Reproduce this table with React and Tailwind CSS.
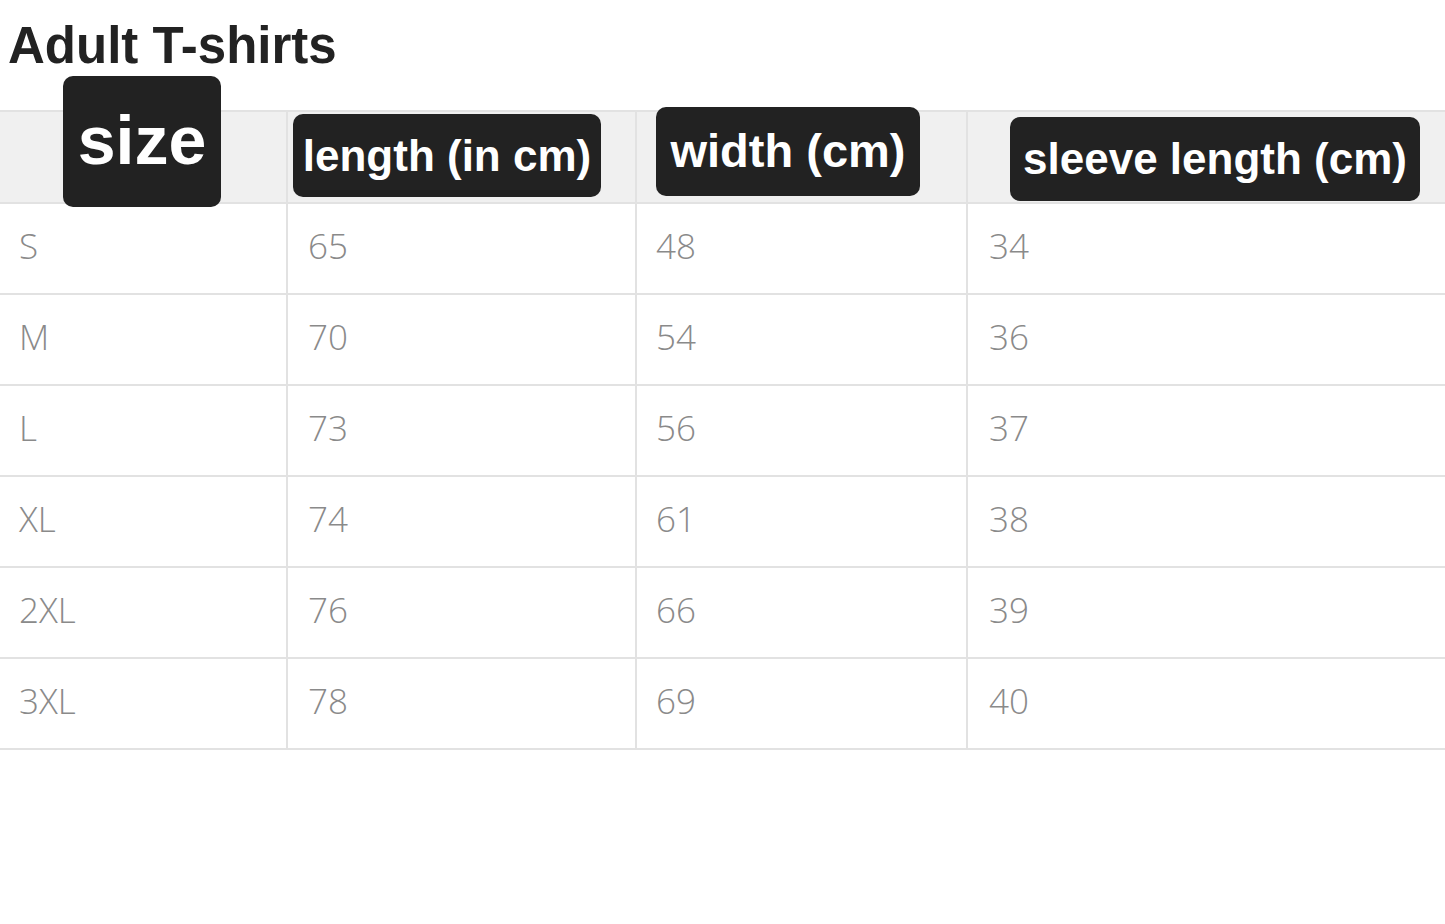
import React from 'react';

const rows = [
  ['S', '65', '48', '34'],
  ['M', '70', '54', '36'],
  ['L', '73', '56', '37'],
  ['XL', '74', '61', '38'],
  ['2XL', '76', '66', '39'],
  ['3XL', '78', '69', '40'],
];

const cols = 'grid grid-cols-[288px_349px_331px_1fr]';

const Badge = ({ className = '', children }) => (
  <div
    className={`absolute flex items-center justify-center rounded-[10px] bg-[#222222] text-white font-bold whitespace-nowrap ${className}`}
    style={{ fontFamily: '"Liberation Sans", Arial, sans-serif' }}
  >
    {children}
  </div>
);

export default function App() {
  return (
    <div className="min-h-[924px] w-[1445px] bg-white overflow-hidden">
      {/* Titre */}
      <h1
        className="pl-[8px] pt-[20px] text-[51px] leading-none font-bold text-[#222222]"
        style={{ fontFamily: '"Liberation Sans", Arial, sans-serif' }}
      >
        Adult T-shirts
      </h1>

      {/* Tableau des tailles */}
      <div className="mt-[39px]">
        <div className={`${cols} h-[94px] border-y-2 border-[#e2e2e2] bg-[#f0f0f0]`}>
          <div className="relative border-r-2 border-[#e2e2e2]">
            <Badge className="left-[63px] top-[-36px] w-[158px] h-[131px] text-[68px] pb-[4px]">size</Badge>
          </div>
          <div className="relative border-r-2 border-[#e2e2e2]">
            <Badge className="left-[5px] top-[2px] w-[308px] h-[83px] text-[44px]">length (in cm)</Badge>
          </div>
          <div className="relative border-r-2 border-[#e2e2e2]">
            <Badge className="left-[19px] top-[-5px] w-[264px] h-[89px] text-[47px]">width (cm)</Badge>
          </div>
          <div className="relative">
            <Badge className="left-[42px] top-[5px] w-[410px] h-[84px] text-[44px]">sleeve length (cm)</Badge>
          </div>
        </div>

        {rows.map((row) => (
          <div key={row[0]} className={`${cols} h-[91px] border-b-2 border-[#e2e2e2]`}>
            {row.map((val, i) => (
              <div
                key={i}
                className={`flex items-center pb-[5px] text-[35px] font-light text-[#8a8a8a] ${
                  i === 0 ? 'pl-[19px]' : i === 1 ? 'pl-[20px]' : i === 2 ? 'pl-[19px]' : 'pl-[21px]'
                } ${i < 3 ? 'border-r-2 border-[#e2e2e2]' : ''}`}
                style={{ fontFamily: '"Open Sans", "Noto Sans", sans-serif' }}
              >
                {val}
              </div>
            ))}
          </div>
        ))}
      </div>
    </div>
  );
}
